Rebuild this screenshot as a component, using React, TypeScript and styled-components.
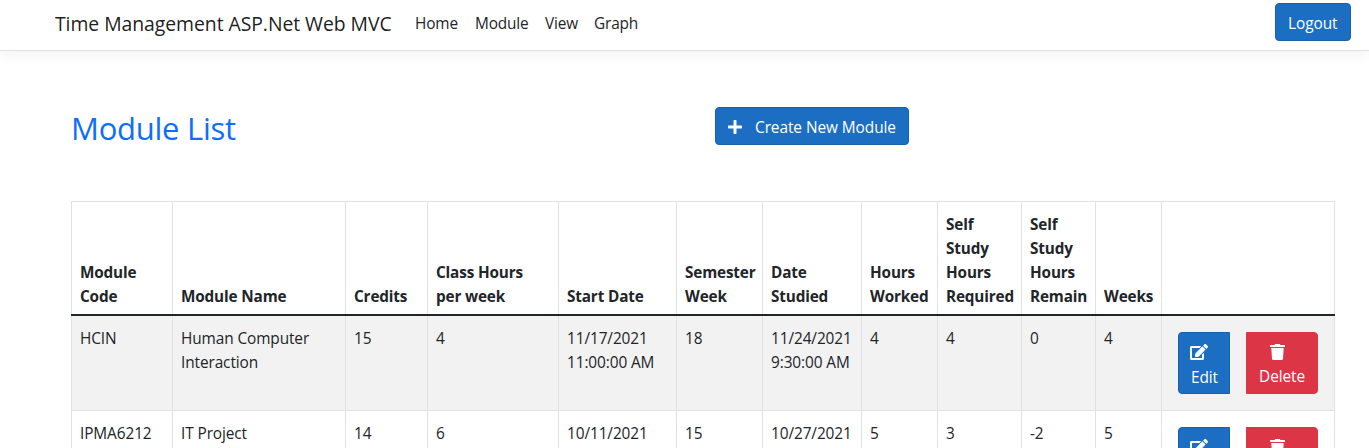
import React from "react";
import styled, { createGlobalStyle } from "styled-components";
import { FaEdit, FaPlus } from "react-icons/fa";

const GlobalStyle = createGlobalStyle`
  *, *::before, *::after { box-sizing: border-box; }
  html { height: 100%; overflow: hidden; }
  body {
    margin: 0;
    background: #fff;
    color: #212529;
    font: 400 15.4px/24px "Segoe UI", "Open Sans", "Noto Sans", sans-serif;
    letter-spacing: -0.1px;
  }
`;

const Navbar = styled.header`
  display: flex;
  align-items: flex-start;
  height: 51px;
  padding: 3px 18px 0 55px;
  border-bottom: 1px solid #dee2e6;
  box-shadow: 0 4px 12px rgba(0, 0, 0, 0.05);
`;

const Brand = styled.a`
  width: 344px;
  padding-top: 6px;
  color: rgba(0, 0, 0, 0.9);
  font-size: 19.4px;
  line-height: 30px;
  letter-spacing: -0.06px;
  white-space: nowrap;
`;

const Nav = styled.nav`
  display: flex;
  flex: 1;
`;

const NavItem = styled.a<{ $width: number }>`
  width: ${(p) => p.$width}px;
  padding: 9px 0 5px 16px;
  letter-spacing: -0.15px;
  white-space: nowrap;
`;

const Button = styled.button<{ $width: number }>`
  display: inline-flex;
  align-items: center;
  width: ${(p) => p.$width}px;
  height: 38px;
  padding: 4px 12px 0;
  border: 1px solid #1861ac;
  border-radius: 4px;
  background: #1b6ec2;
  color: #fff;
  font: inherit;
  letter-spacing: -0.06px;
  white-space: nowrap;
  svg { margin: -3px 12px 0 -1px; }
`;

const Main = styled.main`
  padding: 56px 34px 0 71px;
`;

const TitleRow = styled.div`
  display: flex;
  height: 94px;
`;

const Title = styled.h2`
  width: 644px;
  margin: 0;
  color: #0d6efd;
  font-size: 31px;
  font-weight: 400;
  line-height: 42px;
  letter-spacing: -0.25px;
`;

const Table = styled.table`
  width: 1264px;
  table-layout: fixed;
  border-collapse: collapse;
`;

const HeadCell = styled.th`
  height: 113px;
  padding: 10px 0 6px 8px;
  border: 1px solid #dee2e6;
  border-bottom: 2px solid #212529;
  text-align: left;
  vertical-align: bottom;
  font-weight: 700;
  font-size: 15.3px;
  letter-spacing: -0.15px;
  white-space: pre-line;
`;

const Row = styled.tr<{ $striped: boolean }>`
  height: 95px;
  background: ${(p) => (p.$striped ? "#f2f2f2" : "#fff")};
`;

const Cell = styled.td`
  padding: 11px 0 5px 8px;
  border: 1px solid #dee2e6;
  vertical-align: top;
  white-space: pre-line;
`;

const Actions = styled.div`
  display: flex;
  gap: 16px;
  padding: 5px 0 0 8px;
`;

const ActionButton = styled.button<{ $danger?: boolean }>`
  display: flex;
  flex-direction: column;
  align-items: ${(p) => (p.$danger ? "center" : "flex-start")};
  width: ${(p) => (p.$danger ? 72 : 52)}px;
  height: 62px;
  padding: ${(p) => (p.$danger ? "11px 12px 0" : "10px 11px 0 12px")};
  border: 1px solid ${(p) => (p.$danger ? "#dc3545" : "#1861ac")};
  border-radius: ${(p) => (p.$danger ? "0 4px 4px 0" : "4px 0 0 4px")};
  background: ${(p) => (p.$danger ? "#dc3545" : "#1b6ec2")};
  color: #fff;
  font: inherit;
  letter-spacing: inherit;
  svg {
    flex: none;
    margin: ${(p) => (p.$danger ? "0 9px 5px 0" : "0 0 5px -1px")};
  }
`;

const TrashIcon = () => (
  <svg width="15" height="16" viewBox="0 0 15 16" fill="currentColor" aria-hidden="true">
    <path d="M5.2 0h4.6l.6 1H14.5q.5 0 .5.5V3H0V1.500q0-.5.5-.5H4.600z" />
    <path d="M1.300 4h12.400l-.7 10.700q-.1 1.300-1.400 1.300H3.400q-1.300 0-1.400-1.300z" />
  </svg>
);

const columns = [
  { label: "Module\nCode", width: 101 },
  { label: "Module Name", width: 173 },
  { label: "Credits", width: 82 },
  { label: "Class Hours\nper week", width: 131 },
  { label: "Start Date", width: 118 },
  { label: "Semester\nWeek", width: 86 },
  { label: "Date\nStudied", width: 99 },
  { label: "Hours\nWorked", width: 76 },
  { label: "Self\nStudy\nHours\nRequired", width: 84 },
  { label: "Self\nStudy\nHours\nRemain", width: 74 },
  { label: "Weeks", width: 66 },
  { label: "", width: 173 },
];

const modules = [
  ["HCIN", "Human Computer\nInteraction", "15", "4", "11/17/2021\n11:00:00 AM", "18", "11/24/2021\n9:30:00 AM", "4", "4", "0", "4"],
  ["IPMA6212", "IT Project", "14", "6", "10/11/2021", "15", "10/27/2021", "5", "3", "-2", "5"],
];

export default function App() {
  return (
    <>
      <GlobalStyle />
      <Navbar>
        <Brand>Time Management ASP.Net Web MVC</Brand>
        <Nav>
          <NavItem $width={60}>Home</NavItem>
          <NavItem $width={70}>Module</NavItem>
          <NavItem $width={49}>View</NavItem>
          <NavItem $width={60}>Graph</NavItem>
        </Nav>
        <Button $width={76}>Logout</Button>
      </Navbar>
      <Main>
        <TitleRow>
          <Title>Module List</Title>
          <Button $width={194}>
            <FaPlus size={16} />
            Create New Module
          </Button>
        </TitleRow>
        <Table>
          <colgroup>
            {columns.map((c, i) => (
              <col key={i} width={c.width} />
            ))}
          </colgroup>
          <thead>
            <tr>
              {columns.map((c, i) => (
                <HeadCell key={i}>{c.label}</HeadCell>
              ))}
            </tr>
          </thead>
          <tbody>
            {modules.map((m, r) => (
              <Row key={m[0]} $striped={r % 2 === 0}>
                {m.map((value, i) => (
                  <Cell key={i}>{value}</Cell>
                ))}
                <Cell>
                  <Actions>
                    <ActionButton>
                      <FaEdit size={18} />
                      Edit
                    </ActionButton>
                    <ActionButton $danger>
                      <TrashIcon />
                      Delete
                    </ActionButton>
                  </Actions>
                </Cell>
              </Row>
            ))}
          </tbody>
        </Table>
      </Main>
    </>
  );
}
